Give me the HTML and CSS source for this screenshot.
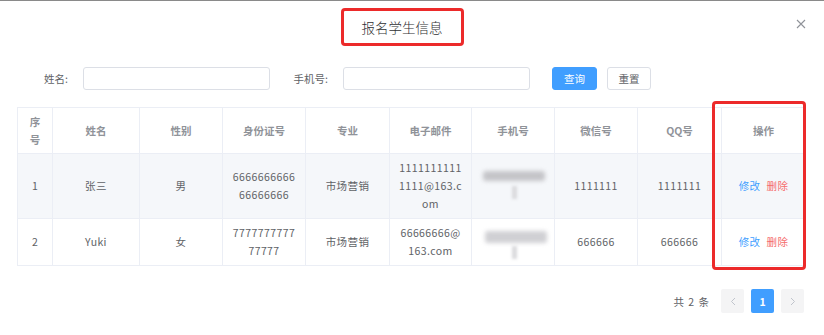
FILE: index.html
```html
<!DOCTYPE html>
<html lang="zh-CN">
<head>
    <meta charset="UTF-8">
    <title>报名学生信息</title>
    <link rel="stylesheet" href="styles.css">
</head>
<body>

<div class="dialog">
    <!-- Dialog header -->
    <div class="dialog-header">
        <span class="dialog-title">报名学生信息</span>
        <button class="dialog-close" aria-label="关闭">
            <svg width="10" height="10" viewBox="0 0 10 10">
                <path d="M1 1L9 9M9 1L1 9" stroke="#909399" stroke-width="1.1" fill="none"/>
            </svg>
        </button>
    </div>

    <!-- Search form -->
    <div class="search-form">
        <label class="form-label label-name">姓名:</label>
        <input class="form-input" type="text">
        <label class="form-label label-phone">手机号:</label>
        <input class="form-input" type="text">
        <button class="btn btn-primary">查询</button>
        <button class="btn">重置</button>
    </div>

    <!-- Student table -->
    <table class="student-table">
        <colgroup>
            <col style="width:35px">
            <col style="width:87px">
            <col style="width:83px">
            <col style="width:83px">
            <col style="width:84px">
            <col style="width:82px">
            <col style="width:83px">
            <col style="width:83px">
            <col style="width:84px">
            <col style="width:84px">
        </colgroup>
        <thead>
            <tr>
                <th>序号</th>
                <th>姓名</th>
                <th>性别</th>
                <th>身份证号</th>
                <th>专业</th>
                <th>电子邮件</th>
                <th>手机号</th>
                <th>微信号</th>
                <th>QQ号</th>
                <th class="op-head">操作</th>
            </tr>
        </thead>
        <tbody>
            <tr class="row-hover">
                <td>1</td>
                <td>张三</td>
                <td>男</td>
                <td>666666666666666666</td>
                <td>市场营销</td>
                <td>11111111111111@163.com</td>
                <td><span class="blur-phone"><span class="blur-bar"></span><span class="blur-tail"></span></span></td>
                <td>1111111</td>
                <td>1111111</td>
                <td class="op-cell"><a class="link-edit">修改</a><a class="link-del">删除</a></td>
            </tr>
            <tr class="row-last">
                <td>2</td>
                <td>Yuki</td>
                <td>女</td>
                <td>777777777777777</td>
                <td>市场营销</td>
                <td>66666666@163.com</td>
                <td><span class="blur-phone"><span class="blur-bar"></span><span class="blur-tail"></span></span></td>
                <td>666666</td>
                <td>666666</td>
                <td class="op-cell"><a class="link-edit">修改</a><a class="link-del">删除</a></td>
            </tr>
        </tbody>
    </table>

    <!-- Highlight around the operation column -->
    <div class="op-mark"></div>

    <!-- Pagination -->
    <div class="pager">
        <span class="pager-total">共 2 条</span>
        <button class="pager-btn">
            <svg width="6" height="9" viewBox="0 0 6 9"><path d="M5 1L1.5 4.5L5 8" stroke="#c0c4cc" stroke-width="1" fill="none"/></svg>
        </button>
        <button class="pager-btn pager-active">1</button>
        <button class="pager-btn">
            <svg width="6" height="9" viewBox="0 0 6 9"><path d="M1 1L4.5 4.5L1 8" stroke="#c0c4cc" stroke-width="1" fill="none"/></svg>
        </button>
    </div>
</div>

</body>
</html>
```

FILE: styles.css
```css
body {
    margin: 0;
    background: #fff;
    font-family: "Noto Sans CJK SC", "Microsoft YaHei", sans-serif;
    color: #606266;
}

.dialog {
    position: relative;
    width: 824px;
    height: 335px;
    border-top: 1px solid #8a8a8a;
    box-sizing: border-box;
    padding: 0 19px 0 17px;
}

/* Header */
.dialog-header {
    position: relative;
    height: 66px;
    display: flex;
    justify-content: center;
    align-items: flex-start;
}

.dialog-title {
    margin-top: 7px;
    margin-left: -18px;
    width: 123px;
    height: 38px;
    box-sizing: border-box;
    border: 3px solid #ec2a2a;
    border-radius: 4px;
    font-size: 13.5px;
    font-weight: 300;
    line-height: 32px;
    text-align: center;
    color: #303133;
}

.dialog-close {
    position: absolute;
    right: -2px;
    top: 16px;
    border: none;
    background: none;
    padding: 0;
    width: 12px;
    height: 12px;
    cursor: pointer;
}

/* Search form */
.search-form {
    display: flex;
    align-items: center;
    height: 23px;
}

.form-label {
    font-size: 10.5px;
    text-align: right;
    padding-right: 15px;
    box-sizing: border-box;
}

.label-name {
    width: 66px;
}

.label-phone {
    width: 73px;
}

.form-input {
    width: 187px;
    height: 23px;
    box-sizing: border-box;
    border: 1px solid #dcdfe6;
    border-radius: 3px;
    outline: none;
    padding: 0 8px;
}

.btn {
    height: 23px;
    width: 44px;
    box-sizing: border-box;
    border: 1px solid #dcdfe6;
    border-radius: 3px;
    background: #fff;
    color: #606266;
    font-family: inherit;
    font-size: 10.5px;
    padding: 0;
    margin-left: 10px;
    cursor: pointer;
}

.btn-primary {
    width: 45px;
    margin-left: 22px;
    background: #409eff;
    border-color: #409eff;
    color: #fff;
}

/* Table */
.student-table {
    margin-top: 17px;
    width: 788px;
    table-layout: fixed;
    border-collapse: collapse;
    font-size: 10.5px;
    border: 1px solid #ebeef5;
}

.student-table th,
.student-table td {
    border: 1px solid #ebeef5;
    text-align: center;
    padding: 0 9px;
    line-height: 18px;
    word-break: break-all;
}

.student-table th {
    height: 45px;
    padding: 0 7px;
    color: #909399;
    font-weight: bold;
}

.student-table td {
    height: 64px;
    letter-spacing: 0.4px;
}

.student-table .row-last td {
    height: 46px;
}

.row-hover td {
    background: #f5f7fa;
}

.blur-phone {
    display: inline-block;
    position: relative;
    width: 68px;
    height: 34px;
    vertical-align: middle;
}

.blur-bar {
    position: absolute;
    left: 2px;
    top: 2px;
    width: 62px;
    height: 10px;
    background: #c4c4c8;
    border-radius: 3px;
    filter: blur(2px);
}

.blur-tail {
    position: absolute;
    left: 31px;
    top: 17px;
    width: 5px;
    height: 13px;
    background: #dadadd;
    filter: blur(1.5px);
}

.row-last .blur-phone {
    margin-top: 8px;
}

.row-last .blur-bar {
    left: 4px;
    height: 12px;
    background: #d0d0d4;
}

.link-edit,
.link-del {
    cursor: pointer;
}

.link-edit {
    color: #409eff;
    margin-right: 6px;
}

.link-del {
    color: #f56c6c;
}

/* Highlight box round the operation column */
.op-mark {
    position: absolute;
    left: 712px;
    top: 100px;
    width: 94px;
    height: 169px;
    box-sizing: border-box;
    border: 3px solid #ec2a2a;
    border-radius: 4px;
    pointer-events: none;
}

/* Pagination */
.pager {
    display: flex;
    justify-content: flex-end;
    align-items: center;
    margin-top: 23px;
    margin-right: 1px;
}

.pager-total {
    font-size: 10.5px;
    margin-right: 11px;
    letter-spacing: 1px;
}

.pager-btn {
    width: 23px;
    height: 24px;
    border: none;
    border-radius: 2px;
    background: #f4f4f5;
    margin-left: 7px;
    padding: 0;
    font-family: inherit;
    font-size: 10.5px;
    font-weight: bold;
    display: flex;
    align-items: center;
    justify-content: center;
}

.pager-btn:first-of-type {
    margin-left: 0;
}

.pager-active {
    background: #409eff;
    color: #fff;
}
```
